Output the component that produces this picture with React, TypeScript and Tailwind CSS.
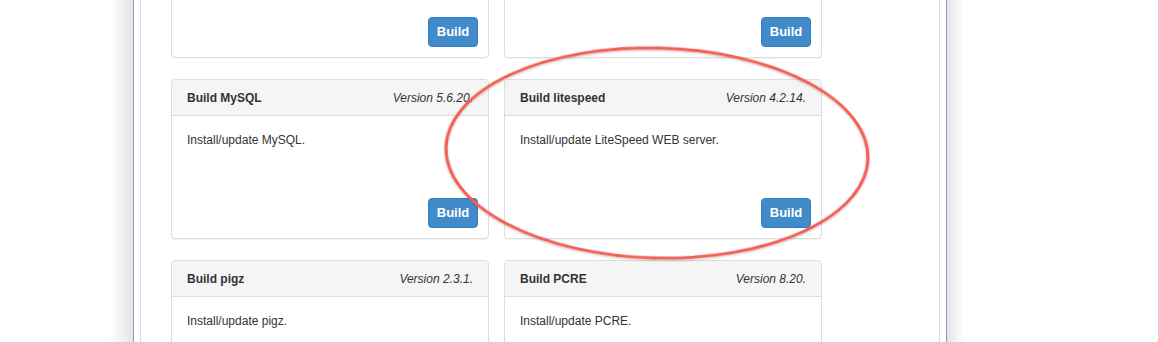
import React from "react";

type Build = { name: string; version: string; desc: string };

const rows: Build[][] = [
  [
    { name: "Build Apache", version: "Version 2.4.10.", desc: "Install/update Apache." },
    { name: "Build PHP", version: "Version 5.5.15.", desc: "Install/update PHP." },
  ],
  [
    { name: "Build MySQL", version: "Version 5.6.20.", desc: "Install/update MySQL." },
    { name: "Build litespeed", version: "Version 4.2.14.", desc: "Install/update LiteSpeed WEB server." },
  ],
  [
    { name: "Build pigz", version: "Version 2.3.1.", desc: "Install/update pigz." },
    { name: "Build PCRE", version: "Version 8.20.", desc: "Install/update PCRE." },
  ],
];

function BuildCard({ item }: { item: Build }) {
  return (
    <div className="flex h-[160px] flex-col rounded-[4px] border border-[#dddddd] bg-white shadow-[0_1px_1px_rgba(0,0,0,0.05)]">
      <div className="flex h-[36px] items-center justify-between rounded-t-[3px] border-b border-[#dddddd] bg-[#f5f5f5] px-[15px] text-[12px] text-[#333333]">
        <span className="font-bold">{item.name}</span>
        <span className="italic">{item.version}</span>
      </div>
      <div className="flex flex-1 flex-col pb-[10px] pl-[15px] pr-[10px] pt-[16px]">
        <p className="text-[12px] leading-[17px] text-[#333333]">{item.desc}</p>
        <button className="mt-auto self-end h-[30px] w-[50px] rounded-[4px] border border-[#357ebd] bg-[#428bca] text-[13px] font-bold text-white">
          Build
        </button>
      </div>
    </div>
  );
}

export default function App() {
  return (
    <div
      className="relative h-[342px] w-[1158px] overflow-hidden bg-white"
      style={{ fontFamily: '"Liberation Sans", Arial, sans-serif' }}
    >
      <div className="ml-[110px] flex h-full w-[853px]">
        {/* window shadow left */}
        <div className="w-[23px] bg-gradient-to-r from-white to-[#e4e4e4]" />
        <div className="w-px bg-[#7f9fc8]" />
        <div className="w-[6px] bg-white" />
        <div className="w-px bg-[#dcdcdc]" />
        {/* content */}
        <div className="flex-1 bg-white pl-[30px]">
          <div className="-mt-[102px] flex flex-col gap-[21px]">
            {rows.map((row, i) => (
              <div key={i} className="grid w-[651px] grid-cols-2 gap-[15px]">
                {row.map((item) => (
                  <BuildCard key={item.name} item={item} />
                ))}
              </div>
            ))}
          </div>
        </div>
        <div className="w-px bg-[#dcdcdc]" />
        <div className="w-[6px] bg-white" />
        <div className="w-px bg-[#7f9fc8]" />
        <div className="w-[16px] bg-gradient-to-r from-[#e4e4e4] to-white" />
      </div>

      {/* annotation ellipse */}
      <svg className="pointer-events-none absolute left-0 top-0" width="1158" height="342">
        <defs>
          <filter id="sh" x="-10%" y="-10%" width="120%" height="120%">
            <feDropShadow dx="0" dy="1" stdDeviation="1.2" floodColor="#000" floodOpacity="0.25" />
          </filter>
        </defs>
        <ellipse
          cx="657"
          cy="153"
          rx="211"
          ry="105"
          transform="rotate(1.5 657 153)"
          fill="none"
          stroke="#f35f52"
          strokeWidth="3"
          filter="url(#sh)"
        />
      </svg>
    </div>
  );
}
